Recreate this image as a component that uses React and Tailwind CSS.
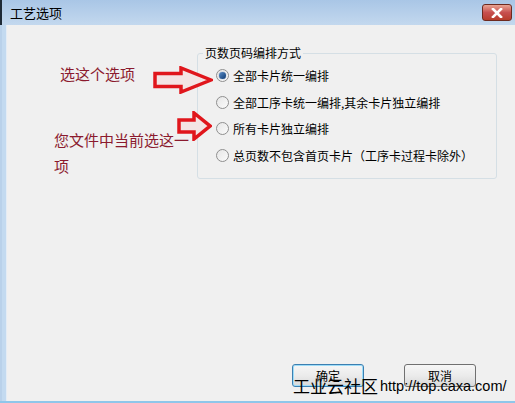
import React from 'react';

const OPTIONS = [
  { label: '全部卡片统一编排', checked: true },
  { label: '全部工序卡统一编排,其余卡片独立编排', checked: false },
  { label: '所有卡片独立编排', checked: false },
  { label: '总页数不包含首页卡片（工序卡过程卡除外）', checked: false },
];

const CJK = { fontFamily: '"Microsoft YaHei", "Noto Sans CJK SC", sans-serif' };

function Radio({ checked }) {
  return (
    <span className="relative flex h-[13px] w-[13px] items-center justify-center rounded-full border border-[#8f8f8f] bg-gradient-to-br from-[#e6e6e6] to-[#fbfbfb]">
      {checked && (
        <span className="h-[7px] w-[7px] rounded-full bg-gradient-to-br from-[#5b8fc9] to-[#0d3a73] shadow-[0_0_1px_#1a4d8c]" />
      )}
    </span>
  );
}

function RedArrow({ className, shaft, head, w, h }) {
  // hollow block arrow, as drawn by hand in the screenshot
  const cy = h / 2;
  const d = `M2 ${cy - shaft / 2} L${w - head} ${cy - shaft / 2} L${w - head} 2 L${w - 2} ${cy} L${w - head} ${h - 2} L${w - head} ${cy + shaft / 2} L2 ${cy + shaft / 2} Z`;
  return (
    <svg className={className} width={w} height={h} viewBox={`0 0 ${w} ${h}`}>
      <path d={d} fill="#f3e4e4" stroke="#e0161c" strokeWidth="3.5" strokeLinejoin="miter" />
    </svg>
  );
}

function Button({ children, focused }) {
  return (
    <button
      className={`flex h-[23px] w-[72px] items-center justify-center rounded-[3px] border bg-gradient-to-b from-[#f6f6f6] via-[#ebebeb] to-[#d9d9d9] text-[12px] text-black ${
        focused ? 'border-[#3c7fb1] shadow-[inset_0_0_0_1px_#9ddcf8]' : 'border-[#707070]'
      }`}
      style={CJK}
    >
      {children}
    </button>
  );
}

export default function App() {
  return (
    <div className="relative h-[403px] w-[515px] overflow-hidden bg-[#b9d1ea]" style={CJK}>
      {/* title bar */}
      <div className="flex h-[25px] items-center justify-between border-l-2 border-[#1e2a36] bg-gradient-to-b from-[#a9c6e6] to-[#c3d8ee] pl-2 pr-[3px]">
        <span className="text-[13px] text-black">工艺选项</span>
        <div className="mb-1 flex h-[17px] w-[30px] items-center justify-center self-end rounded-[3px] border border-[#6d2a1f] bg-gradient-to-b from-[#e8a493] via-[#c75050] to-[#b73c2a]">
          <svg width="12" height="10" viewBox="0 0 12 10">
            <path d="M2 1 L10 9 M10 1 L2 9" stroke="#fff" strokeWidth="2.6" strokeLinecap="square" />
          </svg>
        </div>
      </div>

      {/* client area */}
      <div className="ml-[2px] flex h-[376px] border-l-[4px] border-[#c3daf0]">
        <div className="relative flex flex-1 flex-col border-l border-[#e4ecf5] bg-[#f0f0f0] pb-[14px]">
          <fieldset className="ml-[190px] mt-[21px] h-[133px] w-[300px] rounded-[3px] border border-[#d5dfe5] px-0 pb-0 pt-[9px]">
            <legend className="ml-[5px] px-[2px] text-[12px] leading-[14px] text-black">页数页码编排方式</legend>
            <div className="flex flex-col gap-[13.5px] pl-[18px]">
              {OPTIONS.map((o) => (
                <label key={o.label} className="flex h-[13px] items-center gap-[4px] text-[12px] text-black">
                  <Radio checked={o.checked} />
                  <span className="leading-[13px]">{o.label}</span>
                </label>
              ))}
            </div>
          </fieldset>

          <div className="mt-auto flex gap-[40px] pl-[285px]">
            <Button focused>确定</Button>
            <Button>取消</Button>
          </div>

          {/* annotations drawn over the dialog */}
          <span className="absolute left-[53px] top-[39px] text-[15px] leading-[20px] text-[#8b1a2e]">选这个选项</span>
          <RedArrow className="absolute left-[146px] top-[41px]" w={60} h={28} shaft={13} head={32} />
          <span className="absolute left-[47px] top-[102px] w-[140px] text-[15px] leading-[26px] text-[#8b1a2e]">您文件中当前选这一项</span>
          <RedArrow className="absolute left-[170px] top-[86px]" w={35} h={30} shaft={12} head={18} />

          <div className="absolute left-[286px] top-[351px] flex items-end text-black">
            <span className="text-[17px] leading-[20px]">工业云社区</span>
            <span className="ml-[2px] text-[14.5px] leading-[19px]" style={{ fontFamily: '"Liberation Sans", Arial, sans-serif' }}>
              http://top.caxa.com/
            </span>
          </div>
        </div>
      </div>
      <div className="h-[2px] bg-[#8fc6ea]" />
    </div>
  );
}
